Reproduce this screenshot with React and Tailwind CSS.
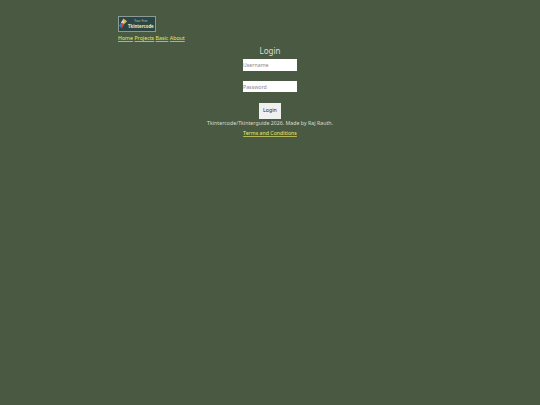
const links = ['Home', 'Projects', 'Basic', 'About'];

const Logo = () => (
  <div className="w-[38px] h-[16px] bg-[#2c4644] border border-[#8a9a94] flex items-center overflow-hidden">
    <svg viewBox="0 0 10 12" className="w-[9px] h-[12px] shrink-0">
      <path d="M5 0 L9 3 L6 6 Z" fill="#e8b93a" />
      <path d="M5 0 L6 6 L2 5 Z" fill="#d8d8d0" />
      <path d="M2 5 L6 6 L3 11 Z" fill="#d9482b" />
      <path d="M2 5 L3 11 L0 8 Z" fill="#3a78c8" />
    </svg>
    <div className="flex flex-col items-center">
      <span className="text-[3px] text-[#b9c4c0] leading-[4px]">Your Free</span>
      <span className="text-[4.3px] font-bold text-[#f0e9b8] leading-[6px]">Tkintercode</span>
    </div>
  </div>
);

export default function App() {
  return (
    <div className="min-h-[405px] bg-[#4a5a42] text-[#d8dccf] font-['Noto_Sans',sans-serif] overflow-hidden">
      <div className="w-[304px] mx-auto pt-[16px]">
        <Logo />
        <nav className="flex gap-[1.5px] mt-[2px] text-[5.25px] leading-[8px]">
          {links.map((l) => (
            <a key={l} href="#" className="text-[#e8e860] underline decoration-[#b4b85a]">{l}</a>
          ))}
        </nav>
        <div className="flex flex-col items-center">
          <h1 className="text-[8px] leading-[11px] mt-[3px] font-normal">Login</h1>
          <input
            placeholder="Username"
            className="w-[54px] h-[12px] mt-[3px] bg-white text-[5.25px] placeholder:text-[#8a8a8a] outline-none"
          />
          <input
            placeholder="Password"
            className="w-[54px] h-[11px] mt-[10px] bg-white text-[5.25px] placeholder:text-[#8a8a8a] outline-none"
          />
          <button className="w-[22px] h-[16px] mt-[11px] bg-[#f0f0f0] text-[#222] text-[5.25px]">Login</button>
          <p className="text-[5.25px] leading-[8px] whitespace-nowrap">
            Tkintercode/Tkinterguide 2026. Made by Raj Rauth.
          </p>
          <a href="#" className="text-[5.25px] leading-[8px] mt-[2px] text-[#e8e860] underline decoration-[#b4b85a]">Terms and Conditions</a>
        </div>
      </div>
    </div>
  );
}
